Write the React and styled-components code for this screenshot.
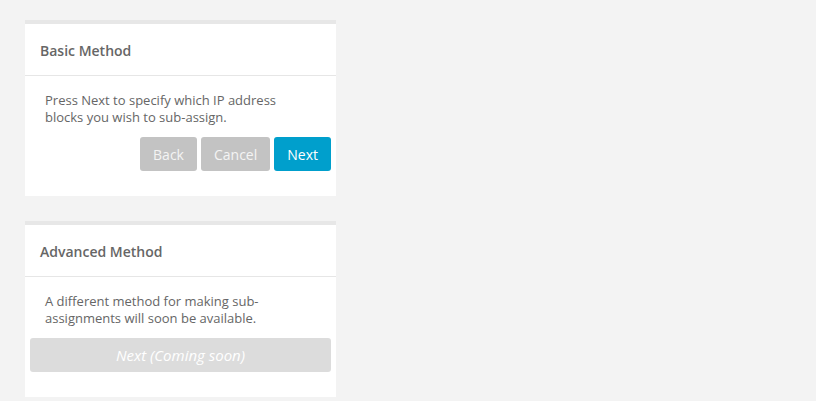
import React from 'react'
import styled, { createGlobalStyle } from 'styled-components'

const Global = createGlobalStyle`
  body {
    margin: 0;
    background: #f3f3f3;
    font-family: "Open Sans", "Liberation Sans", sans-serif;
  }
`

const Page = styled.div`
  display: flex;
  flex-direction: column;
  gap: 25px;
  padding: 20px 0 0 25px;
`

const Card = styled.div`
  width: 311px;
  background: #fff;
  border-top: 4px solid #e7e7e7;
  padding-bottom: 25px;
`

const Header = styled.div`
  padding: 17px 15px 14px;
  line-height: 20px;
  font-size: 14px;
  font-weight: 600;
  color: #666;
  border-bottom: 1px solid #e6e6e6;
`

const Body = styled.div`
  padding: 16px 20px 11px;
  font-size: 13px;
  line-height: 17px;
  color: #666;
`

const Actions = styled.div`
  display: flex;
  justify-content: ${p => (p.$full ? 'stretch' : 'flex-end')};
  gap: 4px;
  padding: 0 5px;
`

const Button = styled.button`
  height: 34px;
  padding: 0 13px;
  border: none;
  border-radius: 3px;
  font-family: inherit;
  font-size: 14px;
  background: ${p => (p.$primary ? '#009fcc' : '#c3c3c3')};
  color: ${p => (p.$primary ? '#fff' : '#f4f4f4')};
  cursor: pointer;
`

const WideButton = styled(Button)`
  flex: 1;
  background: #dcdcdc;
  color: #fff;
  font-size: 15px;
  font-style: italic;
  cursor: default;
`

const App = () => {
  return (
    <>
      <Global />
      <Page>
        <Card>
          <Header>Basic Method</Header>
          <Body>Press Next to specify which IP address blocks you wish to sub-assign.</Body>
          <Actions>
            <Button>Back</Button>
            <Button>Cancel</Button>
            <Button $primary>Next</Button>
          </Actions>
        </Card>
        <Card>
          <Header>Advanced Method</Header>
          <Body>A different method for making sub-assignments will soon be available.</Body>
          <Actions $full>
            <WideButton disabled>Next (Coming soon)</WideButton>
          </Actions>
        </Card>
      </Page>
    </>
  )
}

export default App
